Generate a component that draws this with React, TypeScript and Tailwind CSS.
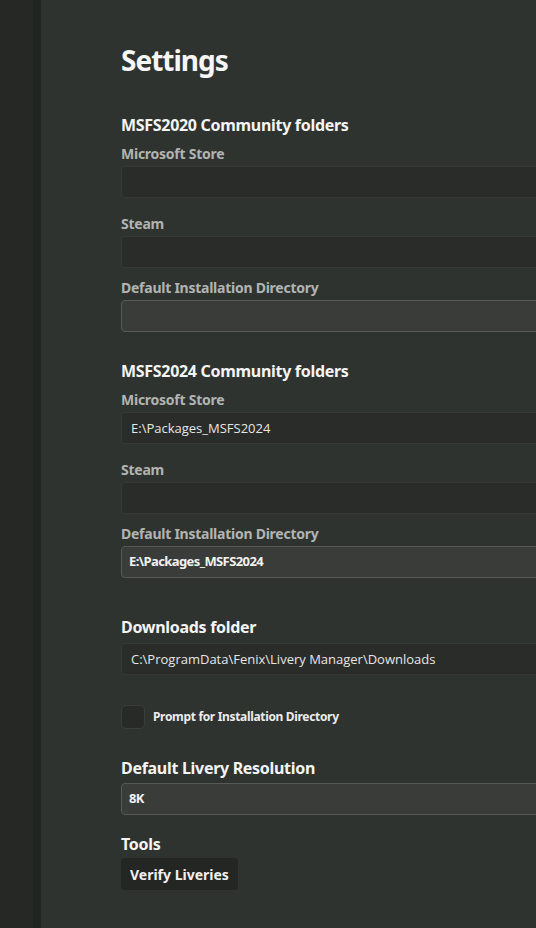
import React from "react";

const head = "font-['Noto_Sans',sans-serif]";
const body = "font-['Open_Sans',sans-serif]";

function Label({ children, mt }: { children: React.ReactNode; mt: string }) {
  return (
    <div className={`${head} ${mt} text-[14px] font-bold leading-[18px] tracking-[-0.25px] text-[#b2b4b2]`}>
      {children}
    </div>
  );
}

function DarkInput({ value, mt = "mt-[3px]" }: { value?: string; mt?: string }) {
  return (
    <div
      className={`${body} ${mt} flex h-[32px] w-[480px] items-center rounded-[4px] border border-[#353835] bg-[#2a2c2a] pl-[9px] pt-[2px] text-[13px] text-[#e6e6e6]`}
    >
      {value}
    </div>
  );
}

function LightInput({ value, mt = "mt-[3px]" }: { value?: string; mt?: string }) {
  return (
    <div
      className={`${head} ${mt} flex h-[32px] w-[480px] items-center rounded-[4px] border border-[#565956] bg-[#393c39] pl-[7px] text-[13px] font-bold tracking-[-0.6px] text-[#f2f2f2]`}
    >
      {value}
    </div>
  );
}

function SectionTitle({ children, mt }: { children: React.ReactNode; mt: string }) {
  return (
    <div className={`${head} ${mt} text-[16px] font-bold leading-[20px] tracking-[-0.3px] text-[#f4f4f4]`}>
      {children}
    </div>
  );
}

export default function App() {
  return (
    <div className="flex h-[928px] w-[536px] overflow-hidden bg-[#2f3330]">
      <div className="flex h-full w-[41px] shrink-0">
        <div className="h-full w-[33px] bg-[#262826]" />
        <div className="h-full w-[8px] bg-[#222423]" />
      </div>
      <div className="flex flex-col pl-[80px] pt-[43px]">
        <div className={`${head} text-[28px] font-bold leading-[34px] tracking-[-1px] text-[#f6f6f6]`}>Settings</div>

        <SectionTitle mt="mt-[38px]">MSFS2020 Community folders</SectionTitle>
        <Label mt="mt-[10px]">Microsoft Store</Label>
        <DarkInput />
        <Label mt="mt-[17px]">Steam</Label>
        <DarkInput />
        <Label mt="mt-[11px]">Default Installation Directory</Label>
        <LightInput />

        <SectionTitle mt="mt-[29px]">MSFS2024 Community folders</SectionTitle>
        <Label mt="mt-[10px]">Microsoft Store</Label>
        <DarkInput value="E:\Packages_MSFS2024" />
        <Label mt="mt-[17px]">Steam</Label>
        <DarkInput />
        <Label mt="mt-[11px]">Default Installation Directory</Label>
        <LightInput value="E:\Packages_MSFS2024" />

        <SectionTitle mt="mt-[39px]">Downloads folder</SectionTitle>
        <DarkInput value="C:\ProgramData\Fenix\Livery Manager\Downloads" mt="mt-[6px]" />

        <div className="mt-[30px] flex h-[24px] items-center gap-[8px]">
          <div className="h-[24px] w-[24px] rounded-[5px] border border-[#3a3d3a] bg-[#282a28]" />
          <span className={`${head} text-[12px] font-bold tracking-[-0.33px] text-[#ececec]`}>
            Prompt for Installation Directory
          </span>
        </div>

        <SectionTitle mt="mt-[29px]">Default Livery Resolution</SectionTitle>
        <LightInput value="8K" mt="mt-[5px]" />

        <SectionTitle mt="mt-[19px]">Tools</SectionTitle>
        <div className="mt-[4px]">
          <button
            className={`${head} h-[32px] rounded-[4px] bg-[#242624] px-[9px] text-[14px] font-bold text-[#f0f0f0]`}
          >
            Verify Liveries
          </button>
        </div>
      </div>
    </div>
  );
}
